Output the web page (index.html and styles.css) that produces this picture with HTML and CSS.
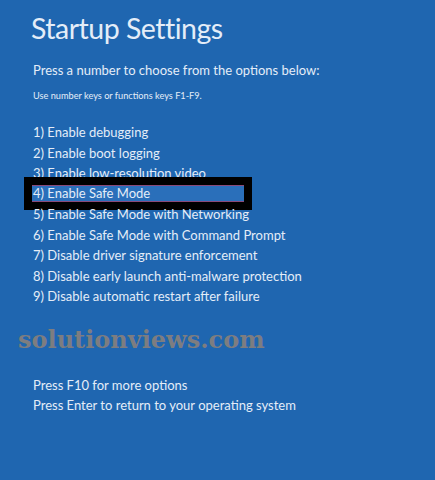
FILE: index.html
```html
<!DOCTYPE html>
<html lang="en">
<head>
    <meta charset="UTF-8">
    <meta name="viewport" content="width=device-width, initial-scale=1.0">
    <title>Startup Settings</title>
    <link rel="stylesheet" href="styles.css">
</head>
<body>
    <div class="screen">
        <h1 class="title">Startup Settings</h1>
        <p class="prompt">Press a number to choose from the options below:</p>
        <p class="hint">Use number keys or functions keys F1-F9.</p>

        <ul class="options">
            <li>1) Enable debugging</li>
            <li>2) Enable boot logging</li>
            <li>3) Enable low-resolution video</li>
            <li class="selected"><span class="selected-bar">4) Enable Safe Mode</span></li>
            <li>5) Enable Safe Mode with Networking</li>
            <li>6) Enable Safe Mode with Command Prompt</li>
            <li>7) Disable driver signature enforcement</li>
            <li>8) Disable early launch anti-malware protection</li>
            <li>9) Disable automatic restart after failure</li>
        </ul>

        <div class="watermark">solutionviews.com</div>

        <ul class="footer">
            <li>Press F10 for more options</li>
            <li>Press Enter to return to your operating system</li>
        </ul>
    </div>
</body>
</html>
```

FILE: styles.css
```css
:root {
    --bg: #1f66b0;
    --text: #e4edf8;
    --bar: #2a6fba;
}

* {
    margin: 0;
    padding: 0;
    box-sizing: border-box;
}

body {
    font-family: 'Lato', 'Noto Sans', sans-serif;
    background: var(--bg);
    color: var(--text);
    height: 100vh;
    overflow: hidden;
}

.screen {
    padding: 10px 0 0 33px;
}

.title {
    font-size: 28.5px;
    font-weight: 400;
    line-height: 36px;
    letter-spacing: -0.5px;
    margin-left: -2px;
}

.prompt {
    font-size: 13px;
    margin-top: 14px;
    line-height: 20px;
}

.hint {
    font-size: 9.2px;
    margin-top: 9px;
    line-height: 14px;
}

.options {
    list-style: none;
    margin-top: 19px;
    font-size: 13px;
}

.options li,
.footer li {
    height: 20.5px;
    line-height: 20.5px;
    white-space: nowrap;
}

.selected {
    display: flex;
    align-items: center;
}

.selected-bar {
    display: block;
    width: 212px;
    height: 17px;
    line-height: 15px;
    margin-left: -1px;
    padding-left: 1px;
    background: var(--bar);
    border-top: 1px solid #8a4a7a;
    border-bottom: 1px solid #8a4a7a;
    outline: 8px solid #000;
}

.watermark {
    font-family: 'DejaVu Serif', 'Liberation Serif', serif;
    font-weight: 700;
    font-size: 24px;
    color: #7d7d80;
    margin: 18px 0 0 -15px;
    line-height: 30px;
}

.footer {
    list-style: none;
    font-size: 13px;
    margin-top: 20px;
}
```
